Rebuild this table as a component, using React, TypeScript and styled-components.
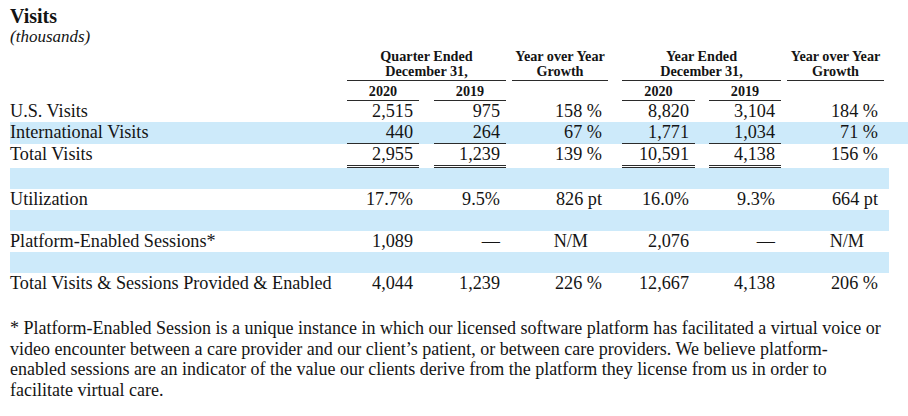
import * as React from "react";
import styled, { createGlobalStyle } from "styled-components";

const GlobalStyle = createGlobalStyle`
    html, body {
        margin: 0;
        padding: 0;
        background: #ffffff;
    }
    body {
        font-family: "Liberation Serif", "Times New Roman", serif;
        color: #141414;
    }
`

// label | q2020 | gap | q2019 | gap | yoy | gap | y2020 | gap | y2019 | gap | yoy | tail
const COLUMNS = "337px 72px 15px 72px 6px 96px 14px 73px 14px 72px 6px 97px 5px";

const Page = styled.div`
    width: 908px;
    height: 416px;
    padding: 5px 0 0 10px;
    box-sizing: border-box;
    overflow: hidden;
`

const Title = styled.h1`
    margin: 0;
    font-size: 20px;
    line-height: 22px;
    font-weight: bold;
`

const Subtitle = styled.div`
    font-size: 17px;
    line-height: 20px;
    font-style: italic;
`

const Grid = styled.div`
    display: grid;
    grid-template-columns: ${COLUMNS};
`

const HeadRow = styled(Grid)`
    margin-top: 2px;
    font-size: 14.2px;
    font-weight: bold;
    line-height: 14.5px;
`

const YearRow = styled(Grid)`
    margin-top: 3px;
    font-size: 14.2px;
    font-weight: bold;
    line-height: 14px;
`

const HeadCell = styled.div<{ $col: string }>`
    grid-column: ${(p) => p.$col};
    text-align: center;
    padding-bottom: 2px;
    border-bottom: 1px solid #2b2b2b;
    align-self: end;
`

const Row = styled(Grid)<{ $band?: boolean }>`
    font-size: 18.2px;
    line-height: 21px;
    background: ${(p) => (p.$band ? "#cdeafa" : "transparent")};
`

const BandRow = styled.div`
    height: 21px;
    width: 879px;
    background: #cdeafa;
`

const Label = styled.div`
    grid-column: 1;
    white-space: nowrap;
`

const Num = styled.div<{ $col: number; $line?: "single" | "double"; $mid?: boolean }>`
    grid-column: ${(p) => p.$col};
    text-align: right;
    padding-right: ${(p) => (p.$mid ? "20px" : "6px")};
    white-space: nowrap;
    border-bottom: ${(p) =>
        p.$line === "single" ? "1px solid #2b2b2b" : p.$line === "double" ? "3px double #2b2b2b" : "none"};
`

const Tail = styled.div`
    grid-column: 13;
`

const Footnote = styled.p`
    margin: 24px 0 0 0;
    font-size: 18px;
    line-height: 20.5px;
    white-space: nowrap;
`

type Line = "single" | "double" | undefined;

interface RowData {
    label: string;
    values: string[];
    band?: boolean;
    line?: Line;
}

const valueCols = [2, 4, 6, 8, 10, 12];

const rows: RowData[] = [
    { label: "U.S. Visits", values: ["2,515", "975", "158 %", "8,820", "3,104", "184 %"] },
    { label: "International Visits", values: ["440", "264", "67 %", "1,771", "1,034", "71 %"], band: true, line: "single" },
    { label: "Total Visits", values: ["2,955", "1,239", "139 %", "10,591", "4,138", "156 %"], line: "double" },
];

const lower: RowData[] = [
    { label: "Utilization", values: ["17.7%", "9.5%", "826 pt", "16.0%", "9.3%", "664 pt"] },
    { label: "Platform-Enabled Sessions*", values: ["1,089", "\u2014", "N/M", "2,076", "\u2014", "N/M"] },
    { label: "Total Visits & Sessions Provided & Enabled", values: ["4,044", "1,239", "226 %", "12,667", "4,138", "206 %"] },
];

function DataRow(props: { row: RowData }) {
    const { row } = props;
    return (
        <Row $band={row.band}>
            <Label>{row.label}</Label>
            {row.values.map((v, i) => {
                const col = valueCols[i];
                const isGrowth = col === 6 || col === 12;
                return (
                    <Num
                        key={col}
                        $col={col}
                        $mid={v === "N/M"}
                        $line={isGrowth ? undefined : row.line}
                    >
                        {v}
                    </Num>
                );
            })}
            <Tail />
        </Row>
    );
}

export default function App() {
    return (
        <Page>
            <GlobalStyle />
            <Title>Visits</Title>
            <Subtitle>(thousands)</Subtitle>
            <HeadRow>
                <HeadCell $col="2 / 5">Quarter Ended<br />December 31,</HeadCell>
                <HeadCell $col="6">Year over Year<br />Growth</HeadCell>
                <HeadCell $col="8 / 11">Year Ended<br />December 31,</HeadCell>
                <HeadCell $col="12">Year over Year<br />Growth</HeadCell>
            </HeadRow>
            <YearRow>
                <HeadCell $col="2">2020</HeadCell>
                <HeadCell $col="4">2019</HeadCell>
                <HeadCell $col="8">2020</HeadCell>
                <HeadCell $col="10">2019</HeadCell>
            </YearRow>
            {rows.map((r) => (
                <DataRow key={r.label} row={r} />
            ))}
            {lower.map((r) => (
                <React.Fragment key={r.label}>
                    <BandRow />
                    <DataRow row={r} />
                </React.Fragment>
            ))}
            <Footnote>
                * Platform-Enabled Session is a unique instance in which our licensed software platform has facilitated a virtual voice or
                <br />
                video encounter between a care provider and our client’s patient, or between care providers. We believe platform-
                <br />
                enabled sessions are an indicator of the value our clients derive from the platform they license from us in order to
                <br />
                facilitate virtual care.
            </Footnote>
        </Page>
    );
}
